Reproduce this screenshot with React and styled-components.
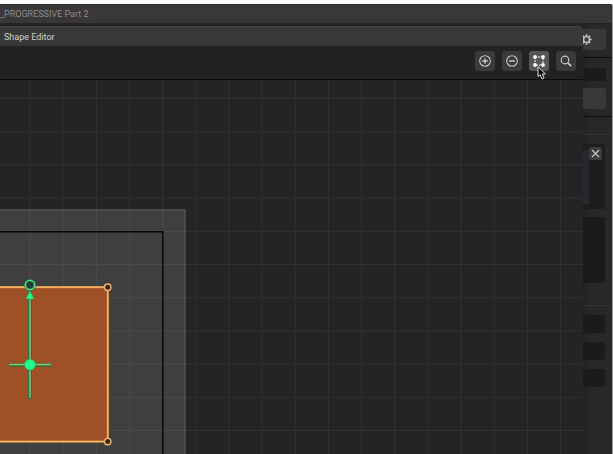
import React from "react";
import styled, { createGlobalStyle } from "styled-components";

const GlobalStyle = createGlobalStyle`
  * {
    box-sizing: border-box;
  }

  body {
    margin: 0;
    background: #fdfdfd;
    font-family: Roboto, "Liberation Sans", sans-serif;
  }
`;

const Page = styled.div`
  display: flex;
  min-height: 100vh;
  padding: 4px 1px 0 0;
`;

const Window = styled.div`
  flex: 1;
  display: flex;
  flex-direction: column;
  min-width: 0;
  border-top: 1px solid #2c2b2c;
  background: #272729;
  border-top-right-radius: 2px;
  box-shadow: 1px 0 0 #9a9a9a;
`;

const TitleBar = styled.header`
  height: 18px;
  line-height: 18px;
  background: linear-gradient(#393838, #393639);
  color: #8f8b8e;
  font-size: 9px;
  white-space: nowrap;
`;

const Workspace = styled.div`
  flex: 1;
  display: grid;
  grid-template-columns: minmax(0, 1fr) 29px;
`;

const Dialog = styled.section`
  display: flex;
  flex-direction: column;
  min-width: 0;
  margin-top: 3px;
  border-top: 1px solid #444344;
  border-top-right-radius: 4px;
  background: #222222;
  box-shadow: 1px 0 3px #161616;
  overflow: hidden;
`;

const DialogTitle = styled.h1`
  height: 19px;
  margin: 0;
  padding-left: 4px;
  background: #383838;
  color: #d0d0d0;
  font-size: 9px;
  font-weight: 400;
  line-height: 20px;
`;

const Toolbar = styled.div`
  display: flex;
  justify-content: flex-end;
  align-items: center;
  gap: 7px;
  height: 34px;
  padding: 0 7px 3px 0;
  border-bottom: 1px solid #0c0c0c;
`;

const ToolButton = styled.button`
  position: relative;
  display: grid;
  place-items: center;
  width: 20px;
  height: 20px;
  padding: 0;
  border: 0;
  border-radius: 3px;
  background: ${(props) => (props.$active ? "#565656" : "#3a3a3a")};
  color: ${(props) => (props.$active ? "#fafafa" : "#c9c9c9")};
`;

const Cursor = styled.svg`
  position: absolute;
  top: 15px;
  left: 8px;
  z-index: 1;
`;

const CanvasArea = styled.div`
  flex: 1;
  display: flex;
  min-height: 374px;
  background: #242424;
`;

const Sidebar = styled.aside`
  display: flex;
  flex-direction: column;
  overflow: hidden;
  border-top: 1px solid #232224;
  background: linear-gradient(90deg, #222123, #28282a 8px);
`;

const Group = styled.div`
  display: flex;
  flex-direction: column;
  gap: ${(props) => props.$gap || 0}px;
  padding: ${(props) => props.$padding};
  border-bottom: ${(props) => (props.$line ? `1px solid ${props.$line}` : "0")};
`;

const PanelButton = styled.button`
  display: flex;
  align-items: center;
  height: 21px;
  padding: 0;
  border: 0;
  border-radius: 0 3px 3px 0;
  background: #39393b;
  color: #c4c4c4;

  svg {
    flex: none;
    margin-left: -2px;
  }
`;

const Field = styled.input`
  width: 100%;
  min-width: 0;
  height: ${(props) => props.$height}px;
  padding: 0;
  border: 0;
  border-radius: 0 2px 2px 0;
  outline: 0;
  background: #1b1a1d;
  color: #c9c9c9;
`;

const Preview = styled.div`
  display: flex;
  justify-content: space-between;
  height: 65px;
  padding: 3px 3px 5px 0;
  border-radius: 0 2px 2px 0;
  background: #1c1b1d;
`;

const Thumbnail = styled.div`
  width: 6px;
  margin-top: 3px;
  background: #2c2630;
`;

const CloseButton = styled.button`
  display: grid;
  place-items: center;
  width: 13px;
  height: 13px;
  padding: 0;
  border: 0;
  border-radius: 2px;
  background: #3c3c3d;
  color: #c4c4c4;
`;

const List = styled.div`
  height: 66px;
  border-radius: 0 2px 2px 0;
  background: #1a191b;
`;

const AddIcon = () => (
  <svg width="14" height="14" viewBox="0 0 14 14" fill="none" stroke="currentColor">
    <circle cx="7" cy="7" r="5.3" strokeWidth="1.1" />
    <path d="M4.2 7h5.6M7 4.2v5.6" strokeWidth="1.4" />
  </svg>
);

const RemoveIcon = () => (
  <svg width="14" height="14" viewBox="0 0 14 14" fill="none" stroke="currentColor">
    <circle cx="7" cy="7" r="5.3" strokeWidth="1.1" />
    <path d="M4.2 7h5.6" strokeWidth="1.4" />
  </svg>
);

const FitIcon = () => (
  <svg width="14" height="14" viewBox="0 0 14 14" fill="currentColor">
    <path
      d="M3 3h8v8H3z"
      fill="none"
      stroke="currentColor"
      strokeWidth="1"
      strokeDasharray="2 1"
    />
    <circle cx="3" cy="3" r="1.9" />
    <circle cx="11" cy="3" r="1.9" />
    <circle cx="3" cy="11" r="1.9" />
    <circle cx="11" cy="11" r="1.9" />
  </svg>
);

const SearchIcon = () => (
  <svg width="14" height="14" viewBox="0 0 14 14" fill="none" stroke="currentColor">
    <circle cx="6" cy="6" r="3.8" strokeWidth="1.2" />
    <path d="M8.8 8.8l3.4 3.4" strokeWidth="1.8" />
  </svg>
);

const GearIcon = () => (
  <svg width="11" height="11" viewBox="0 0 11 11" fill="none" stroke="currentColor">
    <circle cx="5.5" cy="5.5" r="2.9" strokeWidth="1.4" />
    <path
      d="M5.5 .3v2M5.5 8.7v2M.3 5.5h2M8.7 5.5h2M1.9 1.9l1.4 1.4M7.7 7.7l1.4 1.4M9.1 1.9L7.7 3.3M3.3 7.7L1.9 9.1"
      strokeWidth="1.7"
    />
  </svg>
);

const CloseIcon = () => (
  <svg width="9" height="9" viewBox="0 0 9 9" fill="none" stroke="currentColor">
    <path d="M1 1l7 7M8 1L1 8" strokeWidth="1.2" />
  </svg>
);

const Pointer = () => (
  <Cursor width="10" height="14" viewBox="0 0 9 13" aria-hidden="true">
    <path
      d="M.8 .8v9l2-1.8 1.7 4 2-.9-1.7-3.7h2.9z"
      fill="#080808"
      stroke="#e6e6e6"
      strokeWidth=".9"
    />
  </Cursor>
);

// origin of the canvas grid is the pivot of the selected shape
const Canvas = () => (
  <svg width="100%" height="100%" role="img" aria-label="Shape canvas">
    <defs>
      <pattern id="grid" x="29.5" y="18" width="33.15" height="33.2" patternUnits="userSpaceOnUse">
        <path d="M.5 0v34M0 .5h34" stroke="#fff" strokeOpacity=".06" />
      </pattern>
    </defs>
    <rect x="-2" y="130" width="187" height="500" fill="#3f3f3f" stroke="#525252" strokeWidth="1.5" />
    <rect width="100%" height="100%" fill="url(#grid)" />
    <rect x="-3" y="151.8" width="165.8" height="500" fill="none" stroke="#080808" strokeWidth="1.5" />
    <rect x="-3" y="207.2" width="110.8" height="154.4" fill="#9f5027" stroke="#e9983f" strokeWidth="2" />
    <path d="M0 207H107.8V361.6H0" fill="none" stroke="#ffcc82" strokeWidth=".8" />
    <circle cx="107.7" cy="207.2" r="3.2" fill="#2e2722" stroke="#f8b66b" strokeWidth="1.4" />
    <circle cx="107.7" cy="361.6" r="3.2" fill="#2e2722" stroke="#f8b66b" strokeWidth="1.4" />
    <path d="M30 212v107" stroke="#267337" strokeWidth="4" />
    <path d="M30 212v106" stroke="#85a570" strokeWidth="2" />
    <path d="M8.5 285h43" stroke="#3d6d2c" strokeWidth="4" />
    <path d="M9 284.5h42" stroke="#91c383" strokeWidth="1.4" />
    <path d="M25.8 219L30 211l4.2 8z" fill="#25fa8b" stroke="#1c9850" strokeWidth=".6" />
    <circle cx="30" cy="205" r="4.6" fill="#293b32" stroke="#207341" strokeWidth="2.8" />
    <circle cx="30" cy="205" r="4.7" fill="none" stroke="#5be39a" strokeWidth="1.3" />
    <circle cx="30" cy="284.6" r="5.4" fill="#1ffa8b" stroke="#35ad5e" strokeWidth=".8" />
  </svg>
);

export default function App() {
  return (
    <>
      <GlobalStyle />
      <Page>
        <Window>
          <TitleBar>_PROGRESSIVE Part 2</TitleBar>
          <Workspace>
            <Dialog>
              <DialogTitle>Shape Editor</DialogTitle>
              <Toolbar>
                <ToolButton aria-label="Zoom in">
                  <AddIcon />
                </ToolButton>
                <ToolButton aria-label="Zoom out">
                  <RemoveIcon />
                </ToolButton>
                <ToolButton $active aria-label="Fit to view">
                  <FitIcon />
                  <Pointer />
                </ToolButton>
                <ToolButton aria-label="Search">
                  <SearchIcon />
                </ToolButton>
              </Toolbar>
              <CanvasArea>
                <Canvas />
              </CanvasArea>
            </Dialog>
            <Sidebar>
              <Group $padding="5px 6px 7px 0" $line="#0b0b0c">
                <PanelButton aria-label="Settings">
                  <GearIcon />
                </PanelButton>
              </Group>
              <Group $padding="10px 6px 7px 0" $gap={7} $line="#0b0b0c">
                <Field $height={13} aria-label="Name" />
                <PanelButton aria-label="Apply" />
              </Group>
              <Group $padding="17px 0 0" $line="#333335" />
              <Group $padding="9px 7px 22px 0" $gap={8} $line="#333335">
                <Preview>
                  <Thumbnail />
                  <CloseButton aria-label="Close">
                    <CloseIcon />
                  </CloseButton>
                </Preview>
                <List />
              </Group>
              <Group $padding="9px 7px 0 0" $gap={9}>
                <Field $height={18} aria-label="Position" />
                <Field $height={18} aria-label="Rotation" />
                <Field $height={18} aria-label="Scale" />
              </Group>
            </Sidebar>
          </Workspace>
        </Window>
      </Page>
    </>
  );
}
